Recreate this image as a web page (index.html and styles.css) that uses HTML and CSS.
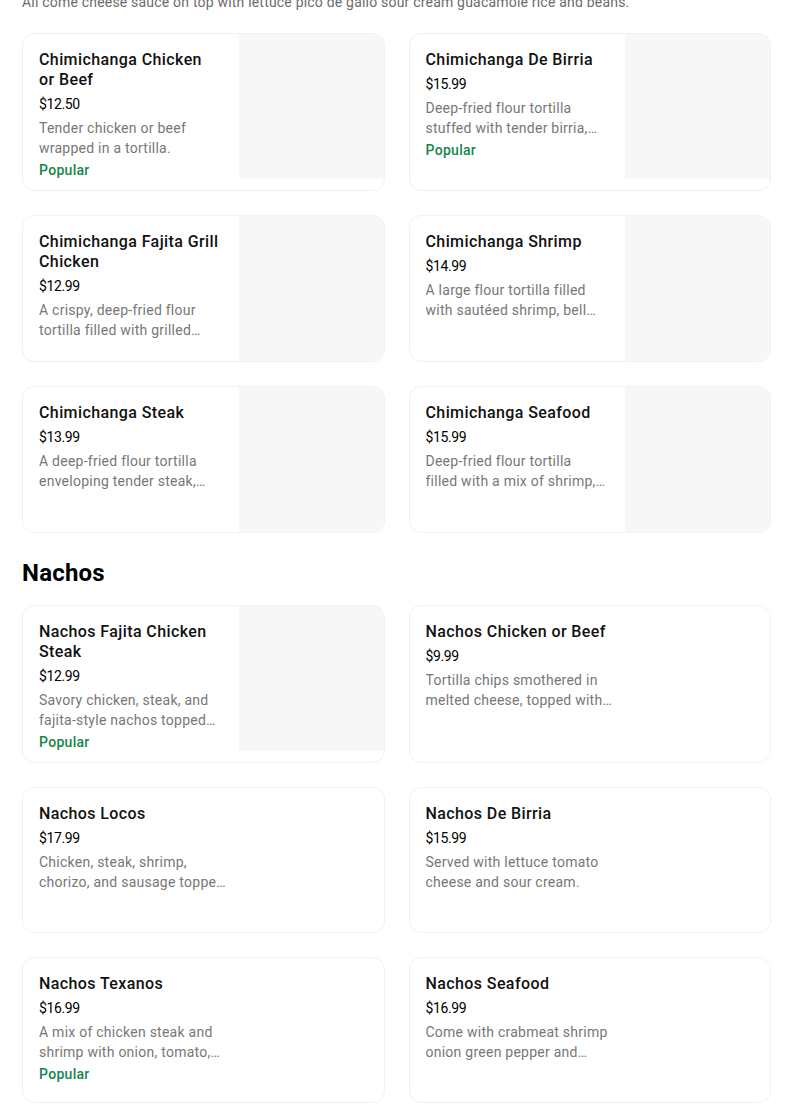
FILE: index.html
```html
<!DOCTYPE html>
<html lang="en">
<head>
<meta charset="utf-8">
<title>Menu</title>
<link rel="stylesheet" href="styles.css">
</head>
<body>
<main class="page">
  <p class="intro">All come cheese sauce on top with lettuce pico de gallo sour cream guacamole rice and beans.</p>
  <div class="grid">
    <div class="card">
      <div class="info">
        <h3 class="title">Chimichanga Chicken or Beef</h3>
        <div class="price">$12.50</div>
        <p class="desc">Tender chicken or beef wrapped in a tortilla.</p>
        <div class="tag">Popular</div>
      </div>
      <div class="thumb"></div>
    </div>
    <div class="card">
      <div class="info">
        <h3 class="title">Chimichanga De Birria</h3>
        <div class="price">$15.99</div>
        <p class="desc">Deep-fried flour tortilla stuffed with tender birria, cheese and onions served with consomé.</p>
        <div class="tag">Popular</div>
      </div>
      <div class="thumb"></div>
    </div>
    <div class="card">
      <div class="info">
        <h3 class="title">Chimichanga Fajita Grill Chicken</h3>
        <div class="price">$12.99</div>
        <p class="desc">A crispy, deep-fried flour tortilla filled with grilled fajita chicken and vegetables.</p>
      </div>
      <div class="thumb"></div>
    </div>
    <div class="card">
      <div class="info">
        <h3 class="title">Chimichanga Shrimp</h3>
        <div class="price">$14.99</div>
        <p class="desc">A large flour tortilla filled with sautéed shrimp, bell peppers and onions.</p>
      </div>
      <div class="thumb"></div>
    </div>
    <div class="card">
      <div class="info">
        <h3 class="title">Chimichanga Steak</h3>
        <div class="price">$13.99</div>
        <p class="desc">A deep-fried flour tortilla enveloping tender steak, cheese and peppers.</p>
      </div>
      <div class="thumb"></div>
    </div>
    <div class="card">
      <div class="info">
        <h3 class="title">Chimichanga Seafood</h3>
        <div class="price">$15.99</div>
        <p class="desc">Deep-fried flour tortilla filled with a mix of shrimp, crab and fish.</p>
      </div>
      <div class="thumb"></div>
    </div>
  </div>

  <h2 class="section">Nachos</h2>
  <div class="grid">
    <div class="card">
      <div class="info">
        <h3 class="title">Nachos Fajita Chicken Steak</h3>
        <div class="price">$12.99</div>
        <p class="desc">Savory chicken, steak, and fajita-style nachos topped with melted cheese.</p>
        <div class="tag">Popular</div>
      </div>
      <div class="thumb"></div>
    </div>
    <div class="card card--plain">
      <div class="info">
        <h3 class="title">Nachos Chicken or Beef</h3>
        <div class="price">$9.99</div>
        <p class="desc">Tortilla chips smothered in melted cheese, topped with chicken or beef.</p>
      </div>
    </div>
    <div class="card card--plain">
      <div class="info">
        <h3 class="title">Nachos Locos</h3>
        <div class="price">$17.99</div>
        <p class="desc">Chicken, steak, shrimp, chorizo, and sausage topped with cheese.</p>
      </div>
    </div>
    <div class="card card--plain">
      <div class="info">
        <h3 class="title">Nachos De Birria</h3>
        <div class="price">$15.99</div>
        <p class="desc">Served with lettuce tomato cheese and sour cream.</p>
      </div>
    </div>
    <div class="card card--plain">
      <div class="info">
        <h3 class="title">Nachos Texanos</h3>
        <div class="price">$16.99</div>
        <p class="desc">A mix of chicken steak and shrimp with onion, tomato, and peppers.</p>
        <div class="tag">Popular</div>
      </div>
    </div>
    <div class="card card--plain">
      <div class="info">
        <h3 class="title">Nachos Seafood</h3>
        <div class="price">$16.99</div>
        <p class="desc">Come with crabmeat shrimp onion green pepper and tomato.</p>
      </div>
    </div>
  </div>
</main>
</body>
</html>
```

FILE: styles.css
```css
* {
  box-sizing: border-box;
}

html, body {
  margin: 0;
  padding: 0;
  background: #ffffff;
}

body {
  font-family: Roboto, "Liberation Sans", Arial, sans-serif;
  color: #000000;
}

.page {
  padding: 0 33px 0 22px;
  margin-top: -8px;
}

.intro {
  margin: 0 0 21px 0;
  font-size: 14px;
  line-height: 20px;
  color: #6b6b6b;
  letter-spacing: 0.2px;
  white-space: nowrap;
  overflow: hidden;
}

.grid {
  display: grid;
  grid-template-columns: 1fr 1fr;
  column-gap: 24px;
  row-gap: 24px;
}

.card {
  display: flex;
  align-items: flex-start;
  min-height: 146px;
  border: 1px solid #f1f1f1;
  border-radius: 12px;
  overflow: hidden;
  background: #ffffff;
}

.info {
  flex: 0 0 212px;
  padding: 16px 16px 10px 16px;
}

.card--plain .info {
  flex-basis: 220px;
}

.title {
  margin: 0;
  font-size: 16px;
  line-height: 20px;
  font-weight: 500;
  letter-spacing: 0.4px;
  color: #111111;
}

.price {
  margin-top: 4px;
  font-size: 14px;
  line-height: 20px;
  letter-spacing: -0.4px;
  color: #000000;
}

.desc {
  margin: 4px 0 0 0;
  font-size: 14px;
  line-height: 20px;
  letter-spacing: 0.25px;
  color: #777777;
  display: -webkit-box;
  -webkit-line-clamp: 2;
  -webkit-box-orient: vertical;
  overflow: hidden;
}

.tag {
  margin-top: 2px;
  font-size: 14px;
  line-height: 20px;
  font-weight: 500;
  letter-spacing: 0.3px;
  color: #16854a;
}

.thumb {
  margin-left: auto;
  width: 145px;
  height: 145px;
  flex: 0 0 145px;
  background: #f7f7f7;
}

.section {
  margin: 24px 0 16px 0;
  font-size: 24px;
  line-height: 32px;
  font-weight: 700;
  letter-spacing: 0.2px;
  color: #000000;
}
```
